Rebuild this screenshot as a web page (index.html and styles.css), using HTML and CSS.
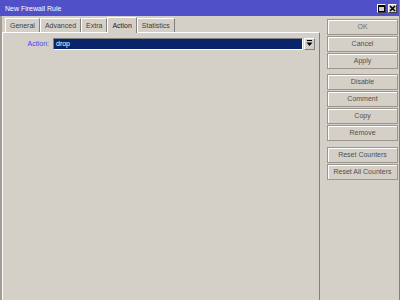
FILE: index.html
```html
<!DOCTYPE html>
<html lang="en">
<head>
    <meta charset="UTF-8">
    <title>New Firewall Rule</title>
    <link rel="stylesheet" href="styles.css">
</head>
<body>
    <div class="window">
        <div class="titlebar">
            <span class="title">New Firewall Rule</span>
            <div class="title-buttons">
                <span class="tbtn">
                    <svg width="7" height="7" viewBox="0 0 7 7"><rect x="0.5" y="0.5" width="6" height="6" fill="none" stroke="#000"/><line x1="0" y1="1.5" x2="7" y2="1.5" stroke="#000"/></svg>
                </span>
                <span class="tbtn">
                    <svg width="7" height="7" viewBox="0 0 7 7"><path d="M1 1L6 6M6 1L1 6" stroke="#000" stroke-width="1.6"/></svg>
                </span>
            </div>
        </div>

        <div class="content">
            <div class="main">
                <div class="tabs">
                    <div class="tab">General</div>
                    <div class="tab">Advanced</div>
                    <div class="tab">Extra</div>
                    <div class="tab active">Action</div>
                    <div class="tab">Statistics</div>
                </div>
                <div class="panel">
                    <div class="field">
                        <label class="field-label">Action:</label>
                        <div class="select">drop</div>
                        <span class="drop-btn">
                            <svg width="7" height="7" viewBox="0 0 7 7"><line x1="1" y1="0.5" x2="6" y2="0.5" stroke="#000"/><path d="M0.5 2.5H6.5L3.5 6Z" fill="#000"/></svg>
                        </span>
                    </div>
                </div>
            </div>

            <div class="sidebar">
                <div class="group">
                    <div class="btn light">OK</div>
                    <div class="btn">Cancel</div>
                    <div class="btn">Apply</div>
                </div>
                <div class="group">
                    <div class="btn">Disable</div>
                    <div class="btn">Comment</div>
                    <div class="btn">Copy</div>
                    <div class="btn">Remove</div>
                </div>
                <div class="group last">
                    <div class="btn">Reset Counters</div>
                    <div class="btn">Reset All Counters</div>
                </div>
            </div>
        </div>
    </div>
</body>
</html>
```

FILE: styles.css
```css
body {
    margin: 0;
    background-color: #d4d0c8;
    font-family: 'Liberation Sans', Arial, sans-serif;
    font-size: 7px;
}

.window {
    width: 400px;
    height: 300px;
    display: flex;
    flex-direction: column;
    box-sizing: border-box;
    border-right: 1px solid #808080;
}

.titlebar {
    height: 16px;
    background-color: #5050c8;
    display: flex;
    align-items: center;
    justify-content: space-between;
    padding: 0 2px 0 5px;
}

.title {
    color: #fff;
}

.title-buttons {
    display: flex;
    gap: 2px;
}

.tbtn {
    width: 9px;
    height: 9px;
    box-sizing: border-box;
    background-color: #d4d0c8;
    border: 1px solid;
    border-color: #fff #404040 #404040 #fff;
    display: flex;
    align-items: center;
    justify-content: center;
}

.content {
    flex: 1;
    display: flex;
}

.main {
    width: 320px;
    box-sizing: border-box;
    display: flex;
    flex-direction: column;
    border-left: 2px solid #a09c94;
}

.tabs {
    display: flex;
    align-items: flex-end;
    height: 16px;
    padding-left: 3px;
}

.tab {
    height: 14px;
    line-height: 14px;
    padding: 0 4px;
    color: #404040;
    box-sizing: border-box;
    border-top: 1px solid #fff;
    border-left: 1px solid #fff;
    border-right: 1px solid #808080;
}

.tab.active {
    height: 16px;
    line-height: 15px;
    margin-bottom: -1px;
    background-color: #d4d0c8;
    position: relative;
    color: #202020;
}

.panel {
    flex: 1;
    border-top: 1px solid #fff;
    border-left: 1px solid #fff;
    border-right: 1px solid #808080;
    padding-top: 4px;
}

.field {
    display: flex;
    align-items: center;
    height: 13px;
}

.field-label {
    width: 46px;
    text-align: right;
    color: #4040ff;
    margin-right: 4px;
}

.select {
    width: 250px;
    height: 12px;
    line-height: 10px;
    box-sizing: border-box;
    background-color: #0a246a;
    color: #fff;
    padding-left: 2px;
    border: 1px solid;
    border-color: #808080 #fff #fff #808080;
}

.drop-btn {
    width: 11px;
    height: 12px;
    margin-left: 1px;
    box-sizing: border-box;
    border: 1px solid;
    border-color: #fff #808080 #808080 #fff;
    display: flex;
    align-items: center;
    justify-content: center;
}

.sidebar {
    width: 71px;
    padding: 3px 0 0 7px;
    display: flex;
    flex-direction: column;
    gap: 5px;
}

.group {
    display: flex;
    flex-direction: column;
    gap: 1px;
}

.group.last {
    margin-top: 1px;
}

.btn {
    height: 16px;
    line-height: 14px;
    box-sizing: border-box;
    text-align: center;
    color: #505050;
    border: 1px solid #9a968e;
    box-shadow: inset 1px 1px #fff;
}

.btn.light {
    color: #707070;
}
```
